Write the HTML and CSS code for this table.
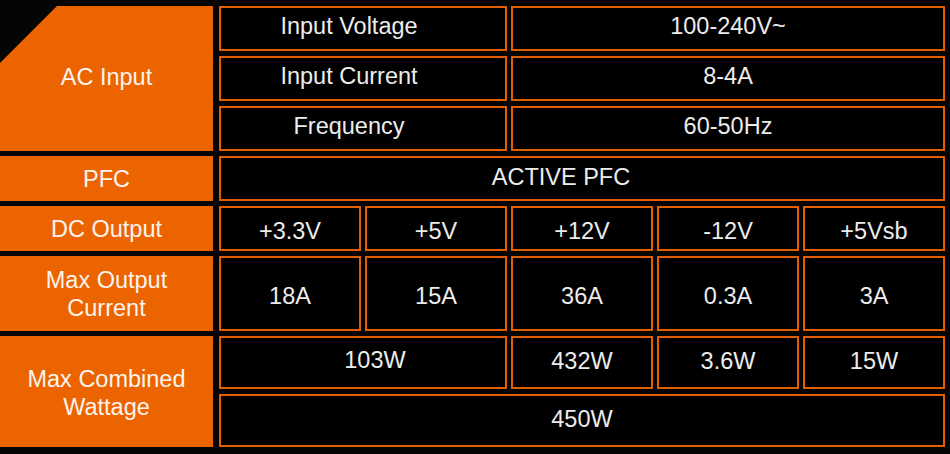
FILE: index.html
```html
<!DOCTYPE html>
<html lang="en">
<head>
  <meta charset="UTF-8">
  <meta name="viewport" content="width=device-width, initial-scale=1.0">
  <title>Power Supply Specifications</title>
  <link rel="stylesheet" href="styles.css">
</head>
<body>
  <div class="spec">
    <!-- AC input -->
    <div class="label label-ac">AC Input</div>
    <div class="cell name shift-l">Input Voltage</div>
    <div class="cell value">100-240V~</div>
    <div class="cell name shift-l">Input Current</div>
    <div class="cell value">8-4A</div>
    <div class="cell name shift-l">Frequency</div>
    <div class="cell value">60-50Hz</div>

    <!-- PFC -->
    <div class="label">PFC</div>
    <div class="cell full shift-pfc">ACTIVE PFC</div>

    <!-- DC output -->
    <div class="label">DC Output</div>
    <div class="cell low">+3.3V</div>
    <div class="cell low">+5V</div>
    <div class="cell low">+12V</div>
    <div class="cell low">-12V</div>
    <div class="cell low">+5Vsb</div>

    <div class="label">Max Output<br>Current</div>
    <div class="cell low">18A</div>
    <div class="cell low">15A</div>
    <div class="cell low">36A</div>
    <div class="cell low">0.3A</div>
    <div class="cell low">3A</div>

    <!-- wattage -->
    <div class="label label-watt">Max Combined<br>Wattage</div>
    <div class="cell name shift-r">103W</div>
    <div class="cell">432W</div>
    <div class="cell">3.6W</div>
    <div class="cell">15W</div>
    <div class="cell full">450W</div>
  </div>
</body>
</html>
```
FILE: styles.css
```css
* { margin: 0; padding: 0; box-sizing: border-box; }
body { background-color: #050505; font-family: "Liberation Sans", Arial, sans-serif; width: 950px; height: 454px; overflow: hidden; }

.spec { display: grid; width: 945px; padding-top: 6px; grid-template-columns: 215px repeat(5, 1fr); grid-template-rows: 45px 45px 45px 45px 45px 75px 53px 53px; column-gap: 4px; row-gap: 5px; }

.label { grid-column: 1; margin-right: 2px; background-color: #ec6400; color: #fbf3ee; font-size: 23.5px; line-height: 28px; display: flex; justify-content: center; align-items: center; text-align: center; }
.label-ac { grid-row: 1 / 4; padding-bottom: 4px; clip-path: polygon(57px 0, 100% 0, 100% 100%, 0 100%, 0 57px); }
.label-watt { grid-row: 7 / 9; padding-top: 2px; }

.cell { border: 2px solid #e25f00; background-color: #000; color: #ececec; font-size: 23.5px; display: flex; justify-content: center; align-items: center; padding-bottom: 2px; }
.cell.name { grid-column: span 2; padding-bottom: 4px; }
.cell.value { grid-column: span 3; padding-bottom: 4px; }
.cell.full { grid-column: span 5; }
.cell.low { padding-bottom: 0; padding-top: 5px; }

/* the text in the original is not quite centred in these boxes */
.shift-l { padding-right: 28px; }
.shift-r { padding-left: 24px; }
.shift-pfc { padding-right: 42px; }
```
